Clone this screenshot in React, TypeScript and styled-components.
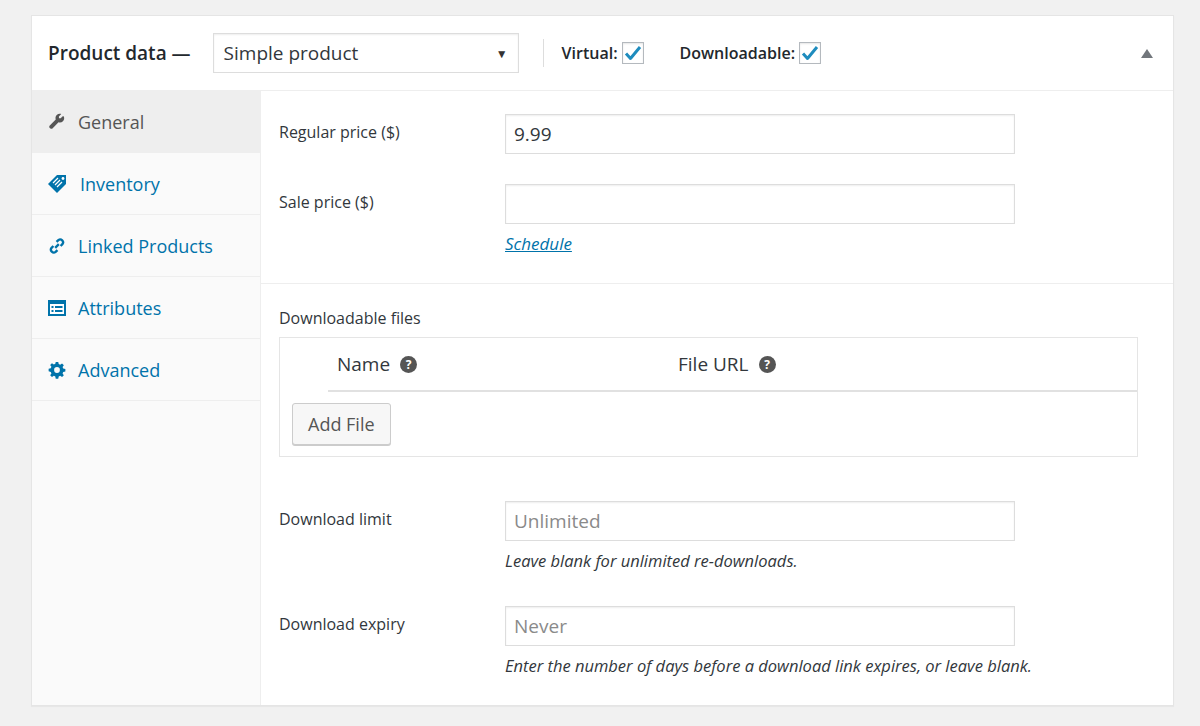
import React from 'react';
import styled, {createGlobalStyle} from "styled-components";

const Global = createGlobalStyle`
  body {
    margin: 0;
    background: #f1f1f1;
    font-family: "Open Sans", "Noto Sans", sans-serif;
    color: #32373c;
  }
`

const Page = styled.div`
  padding: 15px 26px 24px 31px;
`

const Panel = styled.div`
  background: #fff;
  border: 1px solid #e5e5e5;
  box-shadow: 0 1px 1px rgba(0, 0, 0, .04);
  width: 1141px;
`

const Header = styled.div`
  height: 74px;
  display: flex;
  align-items: center;
  padding: 0 16px;
  border-bottom: 1px solid #eee;
`

const Title = styled.h2`
  margin: 0 22px 0 0;
  font-size: 19px;
  font-weight: 600;
  color: #23282d;
`

const Select = styled.div`
  width: 306px;
  height: 40px;
  box-sizing: border-box;
  border: 1px solid #ddd;
  box-shadow: inset 0 1px 2px rgba(0,0,0,.07);
  display: flex;
  align-items: center;
  justify-content: space-between;
  padding: 0 10px;
  font-size: 19px;
  color: #32373c;
`

const Caret = styled.span`
  font-size: 12px;
  color: #333;
`

const Divider = styled.span`
  width: 1px;
  height: 28px;
  background: #ddd;
  margin: 0 18px 0 24px;
`

const CheckLabel = styled.label`
  display: flex;
  align-items: center;
  gap: 4px;
  font-size: 16px;
  font-weight: 600;
  color: #23282d;
  margin-right: 36px;
`

const Box = styled.span`
  width: 22px;
  height: 22px;
  border: 1px solid #b4b9be;
  box-sizing: border-box;
  display: flex;
  align-items: center;
  justify-content: center;
  box-shadow: inset 0 1px 2px rgba(0,0,0,.1);
`

const Toggle = styled.span`
  margin-left: auto;
  margin-right: 4px;
  width: 0;
  height: 0;
  border-left: 6px solid transparent;
  border-right: 6px solid transparent;
  border-bottom: 9px solid #72777c;
`

const Body = styled.div`
  display: flex;
`

const Sidebar = styled.ul`
  list-style: none;
  margin: 0;
  padding: 0;
  width: 228px;
  background: #fafafa;
  border-right: 1px solid #eee;
  flex-shrink: 0;
`

const Tab = styled.li<{ $active?: boolean }>`
  height: 62px;
  box-sizing: border-box;
  border-bottom: 1px solid #eee;
  display: flex;
  align-items: center;
  gap: 12px;
  padding-left: 16px;
  font-size: 18px;
  background: ${p => p.$active ? '#eee' : 'transparent'};
  color: ${p => p.$active ? '#555' : '#0073aa'};
  svg { flex-shrink: 0; }
`

const Main = styled.div`
  flex: 1;
`

const Section = styled.div<{ $border?: boolean }>`
  padding: 23px 0 ${p => p.$border ? 28 : 28}px 18px;
  border-bottom: ${p => p.$border ? '1px solid #eee' : 'none'};
`

const Field = styled.div<{ $gap?: number }>`
  display: grid;
  grid-template-columns: 226px 510px;
  margin-bottom: ${p => p.$gap ?? 30}px;
`

const Label = styled.div`
  font-size: 16px;
  color: #32373c;
  padding-top: 7px;
`

const Input = styled.div<{ $placeholder?: boolean }>`
  height: 40px;
  box-sizing: border-box;
  border: 1px solid #ddd;
  box-shadow: inset 0 1px 2px rgba(0,0,0,.07);
  padding: 0 8px;
  display: flex;
  align-items: center;
  font-size: 19px;
  color: ${p => p.$placeholder ? '#8a8a8a' : '#32373c'};
`

const Note = styled.div`
  grid-column: 2;
  font-size: 16.5px;
  font-style: italic;
  color: #32373c;
  margin-top: 8px;
  white-space: nowrap;
`

const LinkText = styled.a`
  grid-column: 2;
  font-size: 17px;
  font-style: italic;
  color: #0073aa;
  text-decoration: underline;
  margin-top: 8px;
`

const FilesTitle = styled.div`
  font-size: 16px;
  margin-bottom: 8px;
`

const Table = styled.div`
  width: 857px;
  border: 1px solid #e5e5e5;
  margin-bottom: 44px;
`

const THead = styled.div`
  height: 52px;
  display: grid;
  grid-template-columns: 57px 341px 1fr;
  align-items: center;
  font-size: 19px;
  color: #32373c;
`

const TH = styled.span`
  display: flex;
  align-items: center;
  gap: 10px;
`

const Help = styled.span`
  width: 17px;
  height: 17px;
  border-radius: 50%;
  background: #555;
  color: #fff;
  font-size: 12px;
  font-weight: 700;
  display: flex;
  align-items: center;
  justify-content: center;
`

const HeadLine = styled.div`
  margin-left: 48px;
  height: 2px;
  background: #e1e1e1;
`

const TFoot = styled.div`
  height: 64px;
  display: flex;
  align-items: center;
  padding-left: 12px;
`

const Button = styled.button`
  height: 42px;
  padding: 0 15px;
  background: #f7f7f7;
  border: 1px solid #ccc;
  border-radius: 3px;
  box-shadow: 0 1px 0 #ccc;
  font-family: inherit;
  font-size: 18px;
  color: #555;
`

const Check = () => (
  <svg width="18" height="16" viewBox="0 0 18 16">
    <path d="M2 8.5l4.5 5L16 2" fill="none" stroke="#1e8cbe" strokeWidth="3" strokeLinejoin="round"/>
  </svg>
)

const Wrench = () => (
  <svg width="18" height="18" viewBox="0 0 20 20" fill="#555">
    <path d="M16.7 3.2l-2.6 2.6-1.9-.1-.1-1.9 2.6-2.6c-1.7-.6-3.7-.2-5 1.1-1.3 1.3-1.700 3.2-1.1 4.9L2 13.8c-.8.8-.8 2 0 2.8l.4.4c.8.8 2 .8 2.8 0l6.5-6.6c1.7.6 3.6.2 4.9-1.1 1.3-1.3 1.7-3.3 1.1-5z"/>
  </svg>
)

const Tag = () => (
  <svg width="20" height="20" viewBox="0 0 20 20">
    <path d="M9 1h9v9l-9 9L0 10z" fill="#0073aa"/>
    <path d="M5 9l5-5M7 11l5-5M9 13l5-5" stroke="#fff" strokeWidth="1.2"/>
    <circle cx="15" cy="4.5" r="1.4" fill="#fff"/>
  </svg>
)

const Chain = () => (
  <svg width="18" height="18" viewBox="0 0 20 20" fill="none" stroke="#0073aa" strokeWidth="2.6">
    <path d="M8 12l4-4"/>
    <path d="M9.5 5.5l2-2a3.2 3.2 0 014.5 4.5l-2 2"/>
    <path d="M10.5 14.5l-2 2A3.2 3.2 0 014 12l2-2"/>
  </svg>
)

const Card = () => (
  <svg width="18" height="16" viewBox="0 0 18 16">
    <rect x="0" y="0" width="18" height="16" fill="#0073aa"/>
    <rect x="2" y="4" width="14" height="10" fill="#fff"/>
    <rect x="3.5" y="6" width="2" height="2" fill="#0073aa"/>
    <rect x="7" y="6" width="7.5" height="2" fill="#0073aa"/>
    <rect x="3.5" y="10" width="2" height="2" fill="#0073aa"/>
    <rect x="7" y="10" width="7.5" height="2" fill="#0073aa"/>
  </svg>
)

const Gear = () => (
  <svg width="18" height="18" viewBox="0 0 20 20" fill="#0073aa">
    <path d="M11.4 1l.5 2.4 1.6.7 2.1-1.4 2 2-1.4 2.1.7 1.6 2.4.5v2.8l-2.4.5-.7 1.6 1.4 2.1-2 2-2.1-1.4-1.6.7-.5 2.4H8.6l-.5-2.4-1.6-.7-2.1 1.4-2-2 1.4-2.1-.7-1.6L.7 11.4V8.6l2.4-.5.7-1.6-1.4-2.1 2-2 2.1 1.4 1.6-.7L8.6 1zM10 6.8a3.2 3.2 0 100 6.4 3.2 3.2 0 000-6.4z"/>
  </svg>
)

const tabs = [
  {label: 'General', icon: <Wrench/>, active: true},
  {label: 'Inventory', icon: <Tag/>},
  {label: 'Linked Products', icon: <Chain/>},
  {label: 'Attributes', icon: <Card/>},
  {label: 'Advanced', icon: <Gear/>},
]

const App = () => {
  return (
    <Page>
      <Global/>
      <Panel>
        <Header>
          <Title>Product data —</Title>
          <Select>Simple product<Caret>▼</Caret></Select>
          <Divider/>
          <CheckLabel>Virtual: <Box><Check/></Box></CheckLabel>
          <CheckLabel>Downloadable: <Box><Check/></Box></CheckLabel>
          <Toggle/>
        </Header>
        <Body>
          <Sidebar>
            {tabs.map(t => (
              <Tab key={t.label} $active={t.active}>{t.icon}{t.label}</Tab>
            ))}
          </Sidebar>
          <Main>
            <Section $border>
              <Field>
                <Label>Regular price ($)</Label>
                <Input>9.99</Input>
              </Field>
              <Field $gap={0}>
                <Label>Sale price ($)</Label>
                <Input/>
                <LinkText>Schedule</LinkText>
              </Field>
            </Section>
            <Section>
              <FilesTitle>Downloadable files</FilesTitle>
              <Table>
                <THead>
                  <span/>
                  <TH>Name <Help>?</Help></TH>
                  <TH>File URL <Help>?</Help></TH>
                </THead>
                <HeadLine/>
                <TFoot><Button>Add File</Button></TFoot>
              </Table>
              <Field $gap={34}>
                <Label>Download limit</Label>
                <Input $placeholder>Unlimited</Input>
                <Note>Leave blank for unlimited re-downloads.</Note>
              </Field>
              <Field $gap={0}>
                <Label>Download expiry</Label>
                <Input $placeholder>Never</Input>
                <Note>Enter the number of days before a download link expires, or leave blank.</Note>
              </Field>
            </Section>
          </Main>
        </Body>
      </Panel>
    </Page>
  );
};

export default App;
